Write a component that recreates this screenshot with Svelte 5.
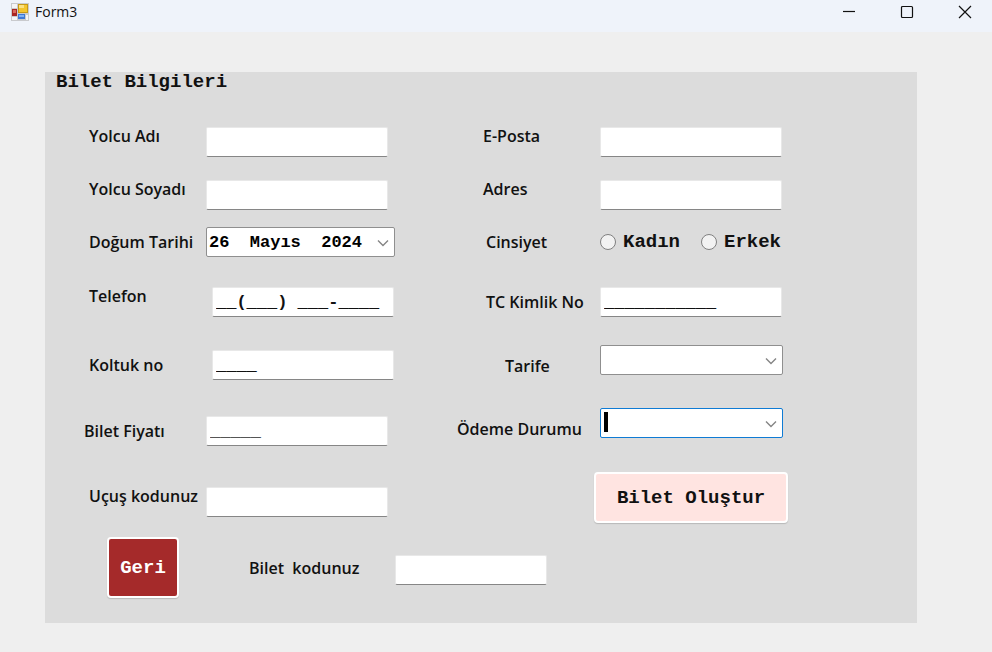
<script>
  let birthDate = $state('26  Mayıs  2024');
  let phone = $state('__(___) ___-____');
  let seat = $state('____');
  let price = $state('_____');
  let identity = $state('___________');
</script>

{#snippet chevron()}
  <svg class="chevron" viewBox="0 0 12 8" aria-hidden="true">
    <path d="M1 1.5 6 6.5 11 1.5" />
  </svg>
{/snippet}

<div class="window">
  <header class="titlebar">
    <svg class="logo" viewBox="0 0 18 18" aria-hidden="true">
      <rect width="18" height="18" fill="#c9cacd" />
      <rect x="1" y="1" width="5" height="4" fill="#f5f5f7" />
      <rect x="1" y="14" width="5" height="3" fill="#f5f5f7" />
      <rect x="15" y="12" width="2" height="5" fill="#f5f5f7" />
      <rect x="1" y="6" width="5" height="7" fill="#a92622" />
      <rect x="2" y="7" width="3" height="3" fill="#d9695c" />
      <rect x="7" y="1" width="10" height="9" fill="#c79a16" />
      <rect x="8" y="2" width="8" height="7" fill="#f3c52f" />
      <rect x="8" y="2" width="5" height="3" fill="#fbe183" />
      <rect x="7" y="11" width="7" height="5" fill="#3f78d4" />
      <rect x="8" y="12" width="5" height="2" fill="#7fb0f5" />
    </svg>
    <h1>Form3</h1>
    <div class="controls">
      <button type="button" aria-label="Simge durumuna küçült">
        <svg viewBox="0 0 14 14"><path d="M1 6.5H13" /></svg>
      </button>
      <button type="button" aria-label="Ekranı kapla">
        <svg viewBox="0 0 14 14"><rect x="1.5" y="1.5" width="11" height="11" rx="1" /></svg>
      </button>
      <button type="button" aria-label="Kapat">
        <svg viewBox="0 0 14 14"><path d="M1 1 13 13M13 1 1 13" /></svg>
      </button>
    </div>
  </header>

  <main>
    <form class="panel" onsubmit={(e) => e.preventDefault()}>
      <h2>Bilet Bilgileri</h2>

      <div class="columns">
        <div class="column left">
          <div class="row high">
            <label for="ad">Yolcu Adı</label>
            <input id="ad" class="field" type="text" />
          </div>
          <div class="row high">
            <label for="soyad">Yolcu Soyadı</label>
            <input id="soyad" class="field" type="text" />
          </div>
          <div class="row">
            <label for="dogum">Doğum Tarihi</label>
            <div class="combo date">
              <input id="dogum" type="text" bind:value={birthDate} />
              {@render chevron()}
            </div>
          </div>
          <div class="row high masked">
            <label for="telefon">Telefon</label>
            <input id="telefon" class="field" type="text" bind:value={phone} />
          </div>
          <div class="row masked">
            <label for="koltuk">Koltuk no</label>
            <input id="koltuk" class="field" type="text" bind:value={seat} />
          </div>
          <div class="row outdent">
            <label for="fiyat">Bilet Fiyatı</label>
            <input id="fiyat" class="field muted" type="text" bind:value={price} />
          </div>
          <div class="row high">
            <label for="ucus">Uçuş kodunuz</label>
            <input id="ucus" class="field" type="text" />
          </div>
        </div>

        <div class="column right">
          <div class="row high">
            <label for="eposta">E-Posta</label>
            <input id="eposta" class="field" type="text" />
          </div>
          <div class="row high">
            <label for="adres">Adres</label>
            <input id="adres" class="field" type="text" />
          </div>
          <div class="row" role="radiogroup" aria-labelledby="cinsiyet">
            <span id="cinsiyet" class="caption">Cinsiyet</span>
            <div class="choices">
              <label><input type="radio" name="cinsiyet" value="k" />Kadın</label>
              <label><input type="radio" name="cinsiyet" value="e" />Erkek</label>
            </div>
          </div>
          <div class="row">
            <label for="tc">TC Kimlik No</label>
            <input id="tc" class="field" type="text" bind:value={identity} />
          </div>
          <div class="row low indent">
            <label for="tarife">Tarife</label>
            <div class="combo">
              <select id="tarife"><option></option></select>
              {@render chevron()}
            </div>
          </div>
          <div class="row low outdent">
            <label for="odeme">Ödeme Durumu</label>
            <div class="combo active">
              <select id="odeme"><option></option></select>
              <span class="caret"></span>
              {@render chevron()}
            </div>
          </div>
          <button class="action create" type="submit">Bilet Oluştur</button>
        </div>
      </div>

      <div class="footer">
        <button class="action back" type="button">Geri</button>
        <label for="kod">Bilet&nbsp; kodunuz</label>
        <input id="kod" class="field" type="text" />
      </div>
    </form>
  </main>
</div>

<style>
  :global(body) {
    margin: 0;
    background: #efefef;
  }

  .window {
    min-height: 100vh;
    background: #efefef;
    color: #111;
    font-family: 'Open Sans', 'Noto Sans', sans-serif;
  }

  .window * {
    box-sizing: border-box;
  }

  .titlebar {
    display: flex;
    align-items: center;
    height: 32px;
    padding: 0 0 8px 11px;
    background: #eff3fa;
  }

  .logo {
    width: 18px;
    height: 18px;
  }

  h1 {
    flex: 1;
    margin: 0 0 0 6px;
    font-size: 14px;
    font-weight: 400;
    line-height: 20px;
  }

  .controls {
    display: flex;
    padding-right: 20px;
    gap: 44px;
  }

  .controls button {
    display: flex;
    padding: 0;
    border: 0;
    background: none;
  }

  .controls svg {
    width: 14px;
    height: 14px;
    fill: none;
    stroke: #111;
    stroke-width: 1.2;
  }

  main {
    padding: 40px 75px 28px 45px;
  }

  .panel {
    background: #dcdcdc;
    padding: 0 0 25px 39px;
  }

  h2 {
    margin: 0 0 0 -28px;
    font: bold 19px/20px 'Liberation Mono', monospace;
  }

  .columns {
    display: grid;
    grid-template-columns: 373fr 460fr;
    padding-top: 35px;
  }

  .column {
    display: grid;
    align-items: start;
  }

  .left {
    grid-template-rows: 53px 47px 60px 63px 66px 71px 50px;
  }

  .right {
    grid-template-rows: 53px 47px 60px 58px 63px 64px 65px;
  }

  .row {
    display: flex;
    align-items: center;
    height: 30px;
  }

  .high {
    align-items: flex-start;
  }

  .low {
    align-items: flex-end;
  }

  .row > label,
  .caption,
  .footer label {
    flex: none;
    font-size: 16px;
    font-weight: 600;
    line-height: 18px;
    white-space: nowrap;
  }

  .left .row > label {
    width: 122px;
    padding-left: 5px;
  }

  .left .masked > label {
    width: 128px;
  }

  .right .row > label,
  .caption {
    width: 143px;
    padding-left: 29px;
  }

  .right .high > label {
    padding-left: 26px;
  }

  .right .indent > label {
    padding-left: 48px;
  }

  .column .outdent > label {
    padding-left: 0;
  }

  .field {
    flex: none;
    width: 182px;
    height: 30px;
    padding: 0 3px;
    border: 1px solid #e8e8e8;
    border-bottom: 1px solid #868686;
    border-radius: 2px;
    outline: 0;
    background: #fff;
    color: #111;
    font: bold 17px/20px 'Liberation Mono', monospace;
  }

  .muted {
    color: #555;
  }

  .combo {
    position: relative;
    width: 183px;
    height: 30px;
    border: 1px solid #8f8f8f;
    border-radius: 2px;
    background: #fff;
  }

  .date {
    width: 189px;
  }

  .active {
    border-color: #0f7bd4;
  }

  .combo input,
  .combo select {
    display: block;
    width: 100%;
    height: 28px;
    padding: 0 2px;
    border: 0;
    outline: 0;
    appearance: none;
    background: none;
    color: #000;
    font: bold 17px/20px 'Liberation Mono', monospace;
  }

  .chevron {
    position: absolute;
    right: 5px;
    top: 11px;
    width: 12px;
    height: 8px;
    fill: none;
    stroke: #858585;
    stroke-width: 1.4;
    pointer-events: none;
  }

  .caret {
    position: absolute;
    left: 3px;
    top: 3px;
    width: 4px;
    height: 20px;
    background: #000;
  }

  .choices {
    display: flex;
    gap: 21px;
  }

  .choices label {
    display: flex;
    align-items: center;
    gap: 7px;
    font: bold 19px/20px 'Liberation Mono', monospace;
  }

  .choices input {
    width: 16px;
    height: 16px;
    margin: 0;
    border: 1px solid #808080;
    border-radius: 50%;
    appearance: none;
    background: #f2f2f2;
  }

  .action {
    padding: 0;
    border: 2px solid #fff;
    border-radius: 4px;
    box-shadow: 0 1px 1px #b8b8b8;
    font: bold 19px/20px 'Liberation Mono', monospace;
  }

  .create {
    width: 194px;
    height: 51px;
    margin-left: 137px;
    background: #ffe4e1;
    color: #111;
  }

  .back {
    width: 72px;
    height: 61px;
    background: #a52a2a;
    color: #fff;
  }

  .footer {
    display: flex;
    align-items: center;
    padding-left: 23px;
  }

  .footer label {
    width: 146px;
    margin-left: 70px;
  }

  .footer .field {
    width: 152px;
    margin-top: 5px;
  }
</style>
